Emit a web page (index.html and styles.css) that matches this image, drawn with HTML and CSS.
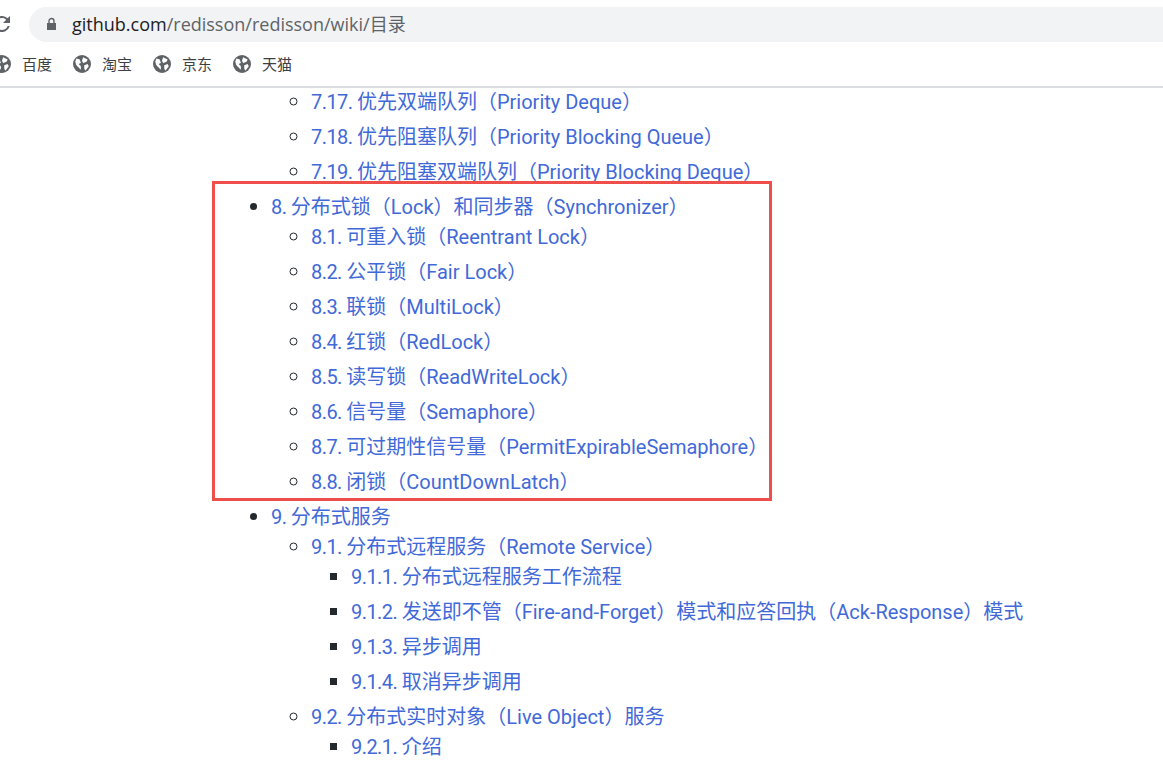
FILE: index.html
```html
<!DOCTYPE html>
<html>
<head>
    <meta charset="utf-8"/>
    <link rel="stylesheet" href="styles.css">
</head>
<body>
<div class="browser-bar">
    <svg class="reload" width="16" height="16" viewBox="0 0 16 16"><path d="M13.65 2.35A8 8 0 1 0 15.73 10h-2.08A6 6 0 1 1 8 2c1.66 0 3.14.69 4.22 1.78L9 7h7V0l-2.35 2.35z" fill="#5f6368"/></svg>
    <div class="address">
        <svg class="lock" width="11" height="14" viewBox="0 0 11 14"><path d="M1 6h9v7H1z" fill="#5f6368"/><path d="M3 6V4a2.5 2.5 0 0 1 5 0v2" fill="none" stroke="#5f6368" stroke-width="1.4"/></svg>
        <span class="url">github.com<span class="url-path">/redisson/redisson/wiki/目录</span></span>
    </div>
</div>
<div class="bookmarks">
    <span class="bookmark"><svg class="globe" width="18" height="18" viewBox="0 0 16 16"><circle cx="8" cy="8" r="8" fill="#5f6368"/><path d="M3 3l3 1 1 3-2 1 2 2v3L3 9 2 6zM9 2l4 2-1 2-3 1-1-2zM10 9l3-1 1 2-3 4-1-2z" fill="#fff"/></svg>百度</span>
    <span class="bookmark"><svg class="globe" width="18" height="18" viewBox="0 0 16 16"><circle cx="8" cy="8" r="8" fill="#5f6368"/><path d="M3 3l3 1 1 3-2 1 2 2v3L3 9 2 6zM9 2l4 2-1 2-3 1-1-2zM10 9l3-1 1 2-3 4-1-2z" fill="#fff"/></svg>淘宝</span>
    <span class="bookmark"><svg class="globe" width="18" height="18" viewBox="0 0 16 16"><circle cx="8" cy="8" r="8" fill="#5f6368"/><path d="M3 3l3 1 1 3-2 1 2 2v3L3 9 2 6zM9 2l4 2-1 2-3 1-1-2zM10 9l3-1 1 2-3 4-1-2z" fill="#fff"/></svg>京东</span>
    <span class="bookmark"><svg class="globe" width="18" height="18" viewBox="0 0 16 16"><circle cx="8" cy="8" r="8" fill="#5f6368"/><path d="M3 3l3 1 1 3-2 1 2 2v3L3 9 2 6zM9 2l4 2-1 2-3 1-1-2zM10 9l3-1 1 2-3 4-1-2z" fill="#fff"/></svg>天猫</span>
</div>
<div class="content">
    <ul class="toc">
        <li class="no-marker">
            <ul>
                <li><a><span class="num">7.17. </span>优先双端队列（Priority Deque）</a></li>
                <li><a><span class="num">7.18. </span>优先阻塞队列（Priority Blocking Queue）</a></li>
                <li><a><span class="num">7.19. </span>优先阻塞双端队列（Priority Blocking Deque）</a></li>
            </ul>
        </li>
        <li><a><span class="num">8. </span>分布式锁（Lock）和同步器（Synchronizer）</a>
            <ul>
                <li><a><span class="num">8.1. </span>可重入锁（Reentrant Lock）</a></li>
                <li><a><span class="num">8.2. </span>公平锁（Fair Lock）</a></li>
                <li><a><span class="num">8.3. </span>联锁（MultiLock）</a></li>
                <li><a><span class="num">8.4. </span>红锁（RedLock）</a></li>
                <li><a><span class="num">8.5. </span>读写锁（ReadWriteLock）</a></li>
                <li><a><span class="num">8.6. </span>信号量（Semaphore）</a></li>
                <li><a><span class="num">8.7. </span>可过期性信号量（PermitExpirableSemaphore）</a></li>
                <li><a><span class="num">8.8. </span>闭锁（CountDownLatch）</a></li>
            </ul>
        </li>
        <li><a><span class="num">9. </span>分布式服务</a>
            <ul>
                <li><a><span class="num">9.1. </span>分布式远程服务（Remote Service）</a>
                    <ul>
                        <li><a><span class="num">9.1.1. </span>分布式远程服务工作流程</a></li>
                        <li><a><span class="num">9.1.2. </span>发送即不管（Fire-and-Forget）模式和应答回执（Ack-Response）模式</a></li>
                        <li><a><span class="num">9.1.3. </span>异步调用</a></li>
                        <li><a><span class="num">9.1.4. </span>取消异步调用</a></li>
                    </ul>
                </li>
                <li><a><span class="num">9.2. </span>分布式实时对象（Live Object）服务</a>
                    <ul>
                        <li><a><span class="num">9.2.1. </span>介绍</a></li>
                    </ul>
                </li>
            </ul>
        </li>
    </ul>
    <div class="highlight-box"></div>
</div>
</body>
</html>
```

FILE: styles.css
```css
html, body {
    margin: 0;
    height: 760px;
    overflow: hidden;
    background: #fff;
}

body {
    font-family: 'Open Sans', 'Noto Sans CJK SC', sans-serif;
    color: #24292e;
}

.browser-bar {
    display: flex;
    align-items: center;
    height: 47px;
    box-sizing: border-box;
    padding-top: 1px;
    background: #fff;
}

.reload {
    margin-left: -6px;
    flex: none;
}

.address {
    display: flex;
    align-items: center;
    flex: 1;
    height: 35px;
    margin-left: 19px;
    padding-left: 17px;
    background: #f1f3f4;
    border-radius: 18px 0 0 18px;
}

.url {
    margin-left: 15px;
    padding-bottom: 2px;
    font-size: 18px;
    color: #202124;
}

.url-path {
    color: #5f6368;
}

.bookmarks {
    display: flex;
    height: 41px;
    box-sizing: border-box;
    padding-bottom: 6px;
    align-items: center;
    border-bottom: 2px solid #dadce0;
    font-size: 15px;
    color: #3c4043;
}

.bookmark {
    display: flex;
    align-items: center;
    gap: 11px;
    width: 80px;
    flex: none;
}

.bookmark:first-child {
    margin-left: -7px;
}

.content {
    position: relative;
    height: 672px;
    overflow: hidden;
}

.toc {
    margin: -1px 0 0 0;
    padding: 0 0 0 271px;
    font-family: Roboto, 'Noto Sans CJK SC', sans-serif;
    font-size: 20px;
    line-height: 30px;
    list-style: disc;
}

.toc ul {
    margin: 0;
    padding-left: 40px;
    list-style: circle;
}

.toc ul ul {
    list-style: square;
}

.toc li::marker {
    font-family: 'Open Sans', sans-serif;
}

.toc a {
    color: #4169d8;
}

.toc .num {
    letter-spacing: -0.55px;
}

.toc li {
    margin-top: 5px;
}

.toc li:first-child {
    margin-top: 0;
}

.toc li.no-marker {
    list-style: none;
}

.highlight-box {
    position: absolute;
    left: 212px;
    top: 93px;
    width: 560px;
    height: 320px;
    box-sizing: border-box;
    border: 3px solid #ef4f4a;
}
```
